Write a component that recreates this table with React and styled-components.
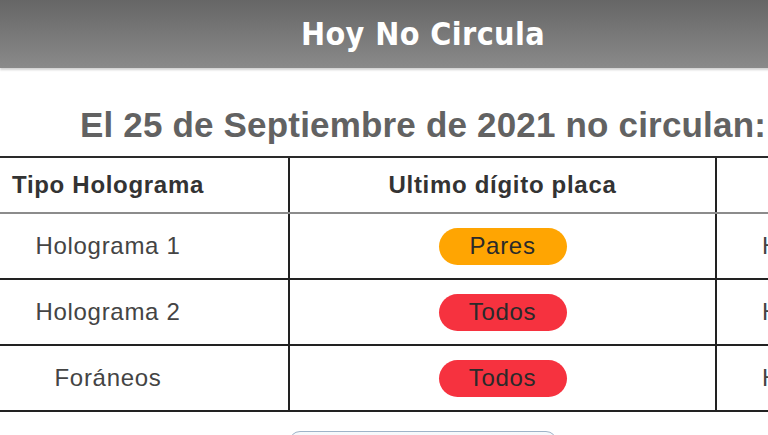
import React from "react";
import styled, { createGlobalStyle } from "styled-components";

const Global = createGlobalStyle`
  html, body { margin: 0; padding: 0; background: #fff; overflow: hidden; }
  body { font-family: "Liberation Sans", Arial, sans-serif; }
`;

const Page = styled.div`
  width: 846px;
  display: flex;
  flex-direction: column;
  align-items: center;
`;

const Header = styled.header`
  align-self: stretch;
  height: 68px;
  display: flex;
  align-items: center;
  justify-content: center;
  background: linear-gradient(#666666, #8a8a8a);
  box-shadow: 0 2px 2px rgba(0, 0, 0, 0.18);
`;

const AppTitle = styled.h1`
  margin: 0;
  color: #fff;
  font-family: "DejaVu Sans Condensed", "DejaVu Sans", sans-serif;
  font-weight: 600;
  font-size: 32px;
  letter-spacing: 0.4px;
`;

const DateTitle = styled.h2`
  margin: 37px 0 11px;
  font-size: 35px;
  line-height: 40px;
  font-weight: bold;
  color: #626262;
  letter-spacing: 0.18px;
  white-space: nowrap;
`;

const Table = styled.table`
  align-self: stretch;
  border-collapse: collapse;
  table-layout: fixed;
  width: 846px;
  font-size: 24px;
  letter-spacing: 0.7px;
`;

const HeadCell = styled.th`
  height: 54px;
  padding: 0 ${(p) => p.$pr || 0}px 0 ${(p) => p.$pl || 0}px;
  text-align: ${(p) => p.$align || "center"};
  font-weight: bold;
  color: #333;
  border-top: 2px solid #2a2a2a;
  border-bottom: 2px solid #8c8c8c;
  border-left: ${(p) => (p.$first ? "none" : "2px solid #222")};
  white-space: nowrap;
  overflow: hidden;
`;

const Cell = styled.td`
  height: 64px;
  padding: 0 ${(p) => p.$pr || 0}px 0 ${(p) => p.$pl || 0}px;
  text-align: ${(p) => p.$align || "center"};
  color: #444;
  border-bottom: 2px solid #222;
  border-left: ${(p) => (p.$first ? "none" : "2px solid #222")};
  white-space: nowrap;
  overflow: hidden;
`;

const Badge = styled.span`
  display: inline-flex;
  align-items: center;
  justify-content: center;
  width: 128px;
  height: 37px;
  border-radius: 19px;
  background: ${(p) => p.$bg};
  color: #2a2a2a;
  font-size: 24px;
`;

const ButtonRow = styled.div`
  margin-top: 19px;
  display: flex;
  justify-content: center;
`;

const MoreButton = styled.button`
  width: 268px;
  height: 42px;
  border: 1px solid #9fb3c8;
  border-radius: 11px;
  background: linear-gradient(#f7f9fb, #e6ecf2);
  font-family: "Liberation Sans", Arial, sans-serif;
  font-size: 20px;
  color: #456;
`;

const rows = [
  { name: "Holograma 1", label: "Pares", color: "#ffa502" },
  { name: "Holograma 2", label: "Todos", color: "#f6323f" },
  { name: "Foráneos", label: "Todos", color: "#f6323f" },
];

export default function App() {
  return (
    <>
      <Global />
      <Page>
        <Header>
          <AppTitle>Hoy No Circula</AppTitle>
        </Header>
        <DateTitle>El 25 de Septiembre de 2021 no circulan:</DateTitle>
        <Table>
          <colgroup>
            <col style={{ width: 289 }} />
            <col style={{ width: 427 }} />
            <col style={{ width: 130 }} />
          </colgroup>
          <thead>
            <tr>
              <HeadCell $first $pr={72}>Tipo Holograma</HeadCell>
              <HeadCell>Ultimo dígito placa</HeadCell>
              <HeadCell $align="left" $pl={70}>Horario</HeadCell>
            </tr>
          </thead>
          <tbody>
            {rows.map((r) => (
              <tr key={r.name}>
                <Cell $first $pr={72}>{r.name}</Cell>
                <Cell>
                  <Badge $bg={r.color}>{r.label}</Badge>
                </Cell>
                <Cell $align="left" $pl={45}>Hoy</Cell>
              </tr>
            ))}
          </tbody>
        </Table>
        <ButtonRow>
          <MoreButton>Ver más</MoreButton>
        </ButtonRow>
      </Page>
    </>
  );
}
